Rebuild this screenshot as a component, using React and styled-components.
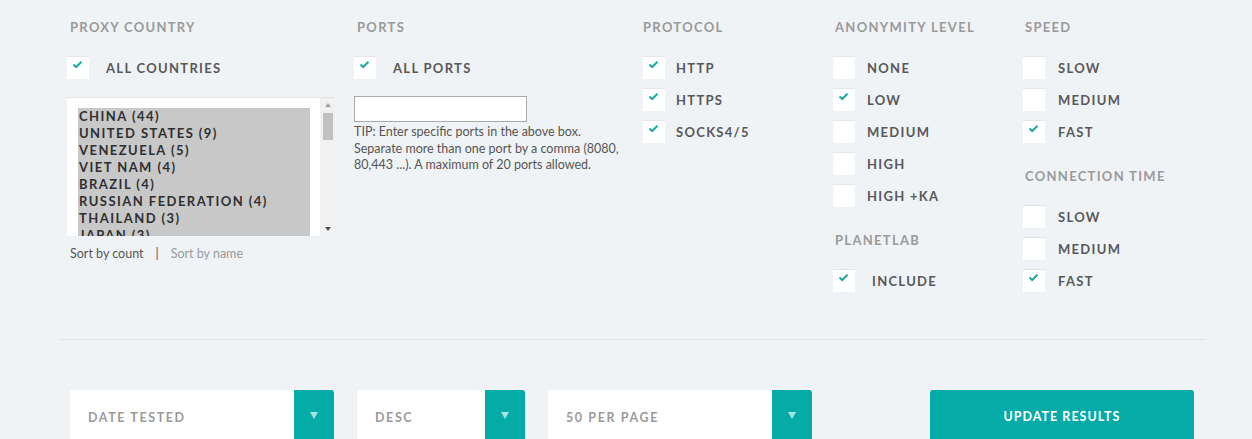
import styled, { createGlobalStyle } from 'styled-components';

const GlobalStyle = createGlobalStyle`
  html, body {
    margin: 0;
    padding: 0;
    background: #f0f3f6;
  }
  body {
    font-family: Lato, "Open Sans", Arial, sans-serif;
    overflow: hidden;
  }
`;

const teal = '#05aba7';

const Page = styled.div`
  width: 1252px;
  height: 439px;
  overflow: hidden;
  background: #f0f3f6;
`;

const Filters = styled.div`
  display: grid;
  grid-template-columns: 287px 286px 192px 190px 1fr;
  padding: 19px 0 0 70px;
  height: 339px;
  box-sizing: border-box;
`;

const Column = styled.div`
  display: flex;
  flex-direction: column;
`;

const Heading = styled.h3`
  margin: 0 0 17px;
  font-size: 13px;
  font-weight: 700;
  letter-spacing: 1.3px;
  color: #9a9a9a;
  line-height: 16px;
  margin-top: ${p => p.$top || 0}px;
`;

const Option = styled.label`
  display: flex;
  align-items: center;
  height: 32px;
  margin-left: ${p => p.$shift || 0}px;
`;

const Box = styled.span`
  width: 22px;
  height: 22px;
  background: #fff;
  box-shadow: 0 -1px 0 #e4e6e8;
  flex: none;
  position: relative;
`;

const Tick = styled.svg`
  position: absolute;
  left: 5px;
  top: 3px;
`;

const LabelText = styled.span`
  margin-left: ${p => p.$gap}px;
  font-size: 13px;
  font-weight: 700;
  letter-spacing: 1.3px;
  color: #58585a;
`;

function Check({ checked, label, gap = 12, shift }) {
  return (
    <Option $shift={shift}>
      <Box>
        {checked && (
          <Tick width="11" height="9" viewBox="0 0 11 9">
            <path d="M1.5 4.5 L4.2 7 L9.5 1.8" fill="none" stroke="#1fa7a2" strokeWidth="2" />
          </Tick>
        )}
      </Box>
      <LabelText $gap={gap}>{label}</LabelText>
    </Option>
  );
}

const ListBox = styled.div`
  margin: 13px 0 0 -3px;
  width: 268px;
  height: 139px;
  background: #fff;
  border-top: 1px solid #e2e4e6;
  display: flex;
  box-sizing: border-box;
  overflow: hidden;
`;

const ListItems = styled.div`
  margin: 10px 0 0 11px;
  width: 232px;
  background: #c8c8c8;
  padding: 0 0 0 1px;
  box-sizing: border-box;
`;

const ListItem = styled.div`
  font-size: 13px;
  font-weight: 700;
  letter-spacing: 1.45px;
  color: #2f2f30;
  line-height: 17px;
  white-space: nowrap;
`;

const ScrollBar = styled.div`
  margin-left: 10px;
  width: 15px;
  background: #f1f1f1;
  display: flex;
  flex-direction: column;
  align-items: center;
`;

const Arrow = styled.div`
  width: 0;
  height: 0;
  border-left: 3.5px solid transparent;
  border-right: 3.5px solid transparent;
  ${p => (p.$down ? 'border-top: 4px solid #505050;' : 'border-bottom: 4px solid #a3a3a3;')}
  margin: ${p => (p.$down ? 'auto 0 5px' : '5px 0 0')};
`;

const Thumb = styled.div`
  margin-top: 6px;
  width: 10px;
  height: 27px;
  background: #c1c1c1;
`;

const SortRow = styled.div`
  margin: 10px 0 0 0;
  font-size: 12.5px;
  color: #555;
  display: flex;
  gap: 12px;
`;

const SortLink = styled.span`
  color: ${p => (p.$muted ? '#9a9a9a' : '#555')};
`;

const PortInput = styled.input`
  margin: 12px 0 0 -3px;
  width: 173px;
  height: 26px;
  border: 1px solid #a9a9a9;
  background: #fff;
  box-sizing: border-box;
  outline: none;
`;

const Tip = styled.p`
  margin: 2px 0 0 -3px;
  font-size: 12.5px;
  line-height: 16.5px;
  color: #555;
  width: 272px;
`;

const Divider = styled.hr`
  margin: 0 47px 0 60px;
  border: 0;
  border-top: 1px solid #dfe3e7;
`;

const Controls = styled.div`
  display: flex;
  align-items: flex-start;
  padding: 50px 0 0 70px;
`;

const Select = styled.div`
  display: flex;
  width: ${p => p.$w}px;
  height: 52px;
  margin-right: ${p => p.$mr}px;
`;

const SelectValue = styled.div`
  flex: 1;
  background: #fff;
  display: flex;
  align-items: center;
  padding: 3px 0 0 18px;
  font-size: 12.5px;
  font-weight: 700;
  letter-spacing: 1.6px;
  color: #9a9a9a;
`;

const SelectButton = styled.div`
  width: 40px;
  background: ${teal};
  border-radius: 0 3px 0 0;
  display: flex;
  justify-content: center;
  padding-top: 22px;
  box-sizing: border-box;
`;

const Caret = styled.div`
  width: 0;
  height: 0;
  border-left: 4px solid transparent;
  border-right: 4px solid transparent;
  border-top: 7px solid #a8e2e0;
`;

const UpdateButton = styled.button`
  margin-left: auto;
  margin-right: 58px;
  width: 264px;
  height: 52px;
  border: 0;
  border-radius: 3px 3px 0 0;
  background: ${teal};
  color: #fff;
  font-family: Lato, "Open Sans", Arial, sans-serif;
  font-size: 12.5px;
  font-weight: 700;
  letter-spacing: 1px;
  padding: 0;
`;

const countries = [
  'CHINA (44)',
  'UNITED STATES (9)',
  'VENEZUELA (5)',
  'VIET NAM (4)',
  'BRAZIL (4)',
  'RUSSIAN FEDERATION (4)',
  'THAILAND (3)',
  'JAPAN (3)',
];

export default function App() {
  return (
    <Page>
      <GlobalStyle />
      <Filters>
        <Column>
          <Heading>PROXY COUNTRY</Heading>
          <Check checked label="ALL COUNTRIES" shift={-3} gap={17} />
          <ListBox>
            <ListItems>
              {countries.map(c => (
                <ListItem key={c}>{c}</ListItem>
              ))}
            </ListItems>
            <ScrollBar>
              <Arrow />
              <Thumb />
              <Arrow $down />
            </ScrollBar>
          </ListBox>
          <SortRow>
            <SortLink>Sort by count</SortLink>
            <span>|</span>
            <SortLink $muted>Sort by name</SortLink>
          </SortRow>
        </Column>

        <Column>
          <Heading>PORTS</Heading>
          <Check checked label="ALL PORTS" shift={-3} gap={17} />
          <PortInput type="text" />
          <Tip>
            TIP: Enter specific ports in the above box. Separate more than one port by a comma (8080,
            80,443 ...). A maximum of 20 ports allowed.
          </Tip>
        </Column>

        <Column>
          <Heading>PROTOCOL</Heading>
          <Check checked label="HTTP" gap={11} />
          <Check checked label="HTTPS" gap={11} />
          <Check checked label="SOCKS4/5" gap={11} />
        </Column>

        <Column>
          <Heading>ANONYMITY LEVEL</Heading>
          <Check label="NONE" shift={-2} />
          <Check checked label="LOW" shift={-2} />
          <Check label="MEDIUM" shift={-2} />
          <Check label="HIGH" shift={-2} />
          <Check label="HIGH +KA" shift={-2} />
          <Heading $top={20}>PLANETLAB</Heading>
          <Check checked label="INCLUDE" shift={-2} gap={17} />
        </Column>

        <Column>
          <Heading>SPEED</Heading>
          <Check label="SLOW" shift={-2} gap={13} />
          <Check label="MEDIUM" shift={-2} gap={13} />
          <Check checked label="FAST" shift={-2} gap={13} />
          <Heading $top={20}>CONNECTION TIME</Heading>
          <Check label="SLOW" shift={-2} gap={13} />
          <Check label="MEDIUM" shift={-2} gap={13} />
          <Check checked label="FAST" shift={-2} gap={13} />
        </Column>
      </Filters>

      <Divider />

      <Controls>
        <Select $w={264} $mr={23}>
          <SelectValue>DATE TESTED</SelectValue>
          <SelectButton>
            <Caret />
          </SelectButton>
        </Select>
        <Select $w={168} $mr={23}>
          <SelectValue>DESC</SelectValue>
          <SelectButton>
            <Caret />
          </SelectButton>
        </Select>
        <Select $w={264} $mr={0}>
          <SelectValue>50 PER PAGE</SelectValue>
          <SelectButton>
            <Caret />
          </SelectButton>
        </Select>
        <UpdateButton>UPDATE RESULTS</UpdateButton>
      </Controls>
    </Page>
  );
}
